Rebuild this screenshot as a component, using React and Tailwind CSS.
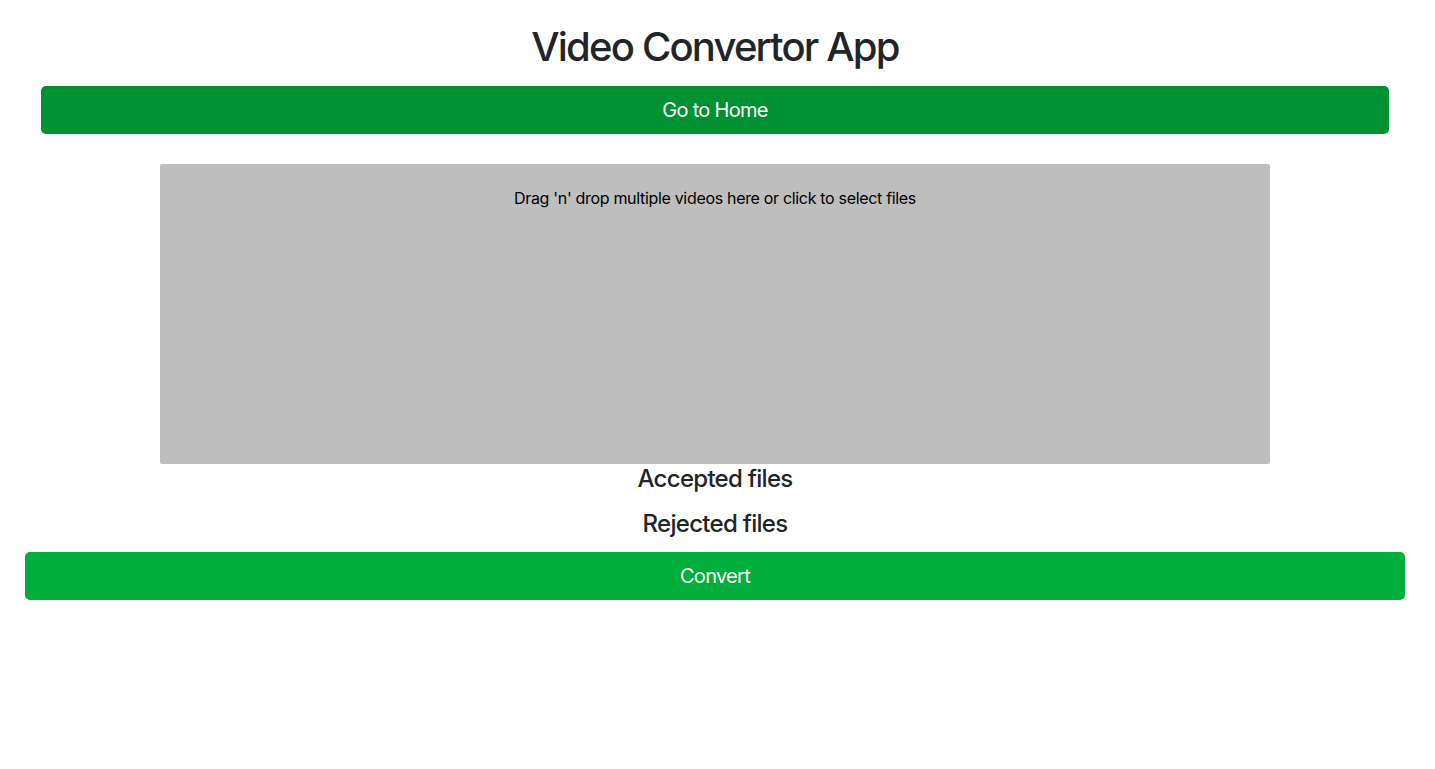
export default function App() {
  return (
    <div
      className="w-[1430px] bg-white text-[#212529] pt-[23px]"
      style={{ fontFamily: 'Inter, "Noto Sans", sans-serif' }}
    >
      <h1 className="text-center text-[40px] leading-[48px] font-medium tracking-[-0.045em]">
        Video Convertor App
      </h1>

      <div className="mx-[41px] mt-[15px]">
        <button className="w-full h-[48px] rounded-[5px] bg-[#009132] text-white text-[20px] tracking-[-0.035em]">
          Go to Home
        </button>
      </div>

      <div className="mx-[160px] mt-[30px] h-[300px] rounded-[2px] bg-[#bebebe] pt-[22px] text-center text-black text-[16px] leading-[24px] tracking-[-0.02em]">
        Drag 'n' drop multiple videos here or click to select files
      </div>

      <div className="text-center tracking-[-0.045em]">
        <h4 className="text-[24px] leading-[29px] font-medium">Accepted files</h4>
        <ul className="mt-[16px]"></ul>
        <h4 className="text-[24px] leading-[29px] font-medium">Rejected files</h4>
      </div>

      <div className="mx-[25px] mt-[14px]">
        <button className="w-full h-[48px] rounded-[5px] bg-[#00ae3c] text-white text-[20px] tracking-[-0.035em]">
          Convert
        </button>
      </div>
    </div>
  );
}
